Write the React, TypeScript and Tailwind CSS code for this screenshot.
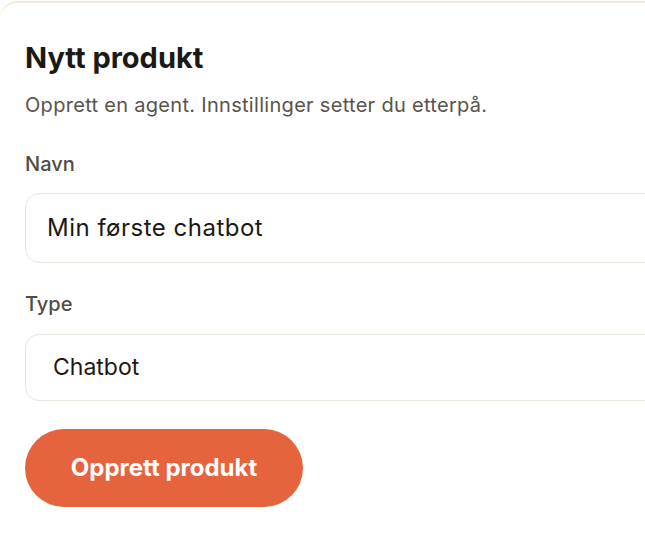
export default function App() {
  return (
    <div className="h-[540px] w-[645px] overflow-hidden bg-white" style={{ fontFamily: 'Inter, "Noto Sans", sans-serif' }}>
      <div className="mt-px h-[600px] w-[720px] rounded-tl-[18px] border-t-2 border-[#f3ead9] bg-white pl-[25px] pt-[38px]">
        <h1 className="text-[29px] font-bold leading-[34px] tracking-[0px] text-[#1c1914]">Nytt produkt</h1>
        <p className="mt-[16px] text-[20px] leading-[28px] tracking-[0.3px] text-[#58544d]">
          Opprett en agent. Innstillinger setter du etterpå.
        </p>

        <label className="mt-[33px] block text-[20px] font-medium leading-[24px] text-[#4f4b45]">Navn</label>
        <div className="mt-[17px] flex h-[70px] items-center rounded-[14px] border border-[#e9e5dd] bg-white pl-[21px]">
          <span className="text-[24px] tracking-[0.5px] text-[#1c1914]">Min første chatbot</span>
        </div>

        <label className="mt-[29px] block text-[20px] font-medium leading-[24px] text-[#4f4b45]">Type</label>
        <div className="mt-[18px] flex h-[67px] items-center rounded-[14px] border border-[#e9e5dd] bg-white pl-[27px]">
          <span className="text-[23px] text-[#1c1914]">Chatbot</span>
        </div>

        <button className="mt-[28px] flex h-[78px] w-[278px] items-center justify-center rounded-full bg-[#e5643e] text-[24px] font-bold text-white">
          Opprett produkt
        </button>
      </div>
    </div>
  );
}
